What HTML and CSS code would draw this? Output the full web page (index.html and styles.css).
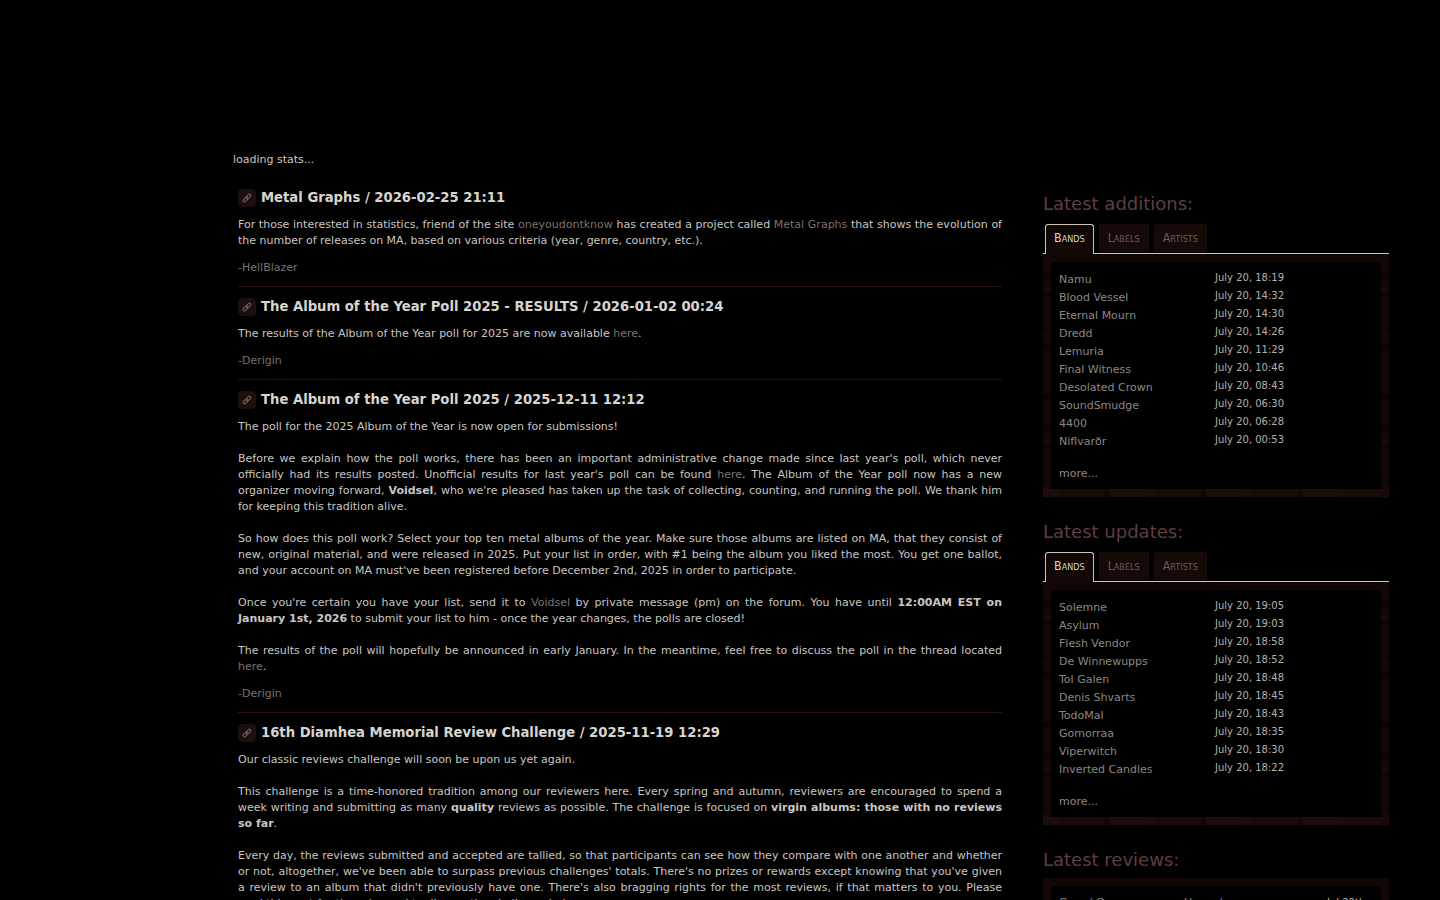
FILE: index.html
```html
<!DOCTYPE html>
<html lang="en">
<head>
  <meta charset="UTF-8" />
  <title>Encyclopaedia Metallum</title>
  <link rel="stylesheet" href="styles.css">
</head>
<body>
  <div class="page">
    <div class="stats">loading stats...</div>
    <div class="columns">
      <main class="news">
        <article class="post">
          <h2><span class="permalink"><svg viewBox="0 0 12 12"><g transform="rotate(-45 6 6)"><rect x="0.2" y="4.4" width="6.4" height="3.2" rx="1.6"/><rect x="5.4" y="4.4" width="6.4" height="3.2" rx="1.6"/></g></svg></span>Metal Graphs / 2026-02-25 21:11</h2>
          <p>For those interested in statistics, friend of the site <a href="#">oneyoudontknow</a> has created a project called <a href="#">Metal Graphs</a> that shows the evolution of the number of releases on MA, based on various criteria (year, genre, country, etc.).</p>
          <p class="sign">-<a href="#">HellBlazer</a></p>
        </article>
        <article class="post">
          <h2><span class="permalink"><svg viewBox="0 0 12 12"><g transform="rotate(-45 6 6)"><rect x="0.2" y="4.4" width="6.4" height="3.2" rx="1.6"/><rect x="5.4" y="4.4" width="6.4" height="3.2" rx="1.6"/></g></svg></span>The Album of the Year Poll 2025 - RESULTS / 2026-01-02 00:24</h2>
          <p>The results of the Album of the Year poll for 2025 are now available <a href="#">here</a>.</p>
          <p class="sign">-<a href="#">Derigin</a></p>
        </article>
        <article class="post">
          <h2><span class="permalink"><svg viewBox="0 0 12 12"><g transform="rotate(-45 6 6)"><rect x="0.2" y="4.4" width="6.4" height="3.2" rx="1.6"/><rect x="5.4" y="4.4" width="6.4" height="3.2" rx="1.6"/></g></svg></span>The Album of the Year Poll 2025 / 2025-12-11 12:12</h2>
          <p>The poll for the 2025 Album of the Year is now open for submissions!<br><br>
          Before we explain how the poll works, there has been an important administrative change made since last year's poll, which never officially had its results posted. Unofficial results for last year's poll can be found <a href="#">here</a>. The Album of the Year poll now has a new organizer moving forward, <strong>Voidsel</strong>, who we're pleased has taken up the task of collecting, counting, and running the poll. We thank him for keeping this tradition alive.<br><br>
          So how does this poll work? Select your top ten metal albums of the year. Make sure those albums are listed on MA, that they consist of new, original material, and were released in 2025. Put your list in order, with #1 being the album you liked the most. You get one ballot, and your account on MA must've been registered before December 2nd, 2025 in order to participate.<br><br>
          Once you're certain you have your list, send it to <a href="#">Voidsel</a> by private message (pm) on the forum. You have until <strong>12:00AM EST on January 1st, 2026</strong> to submit your list to him - once the year changes, the polls are closed!<br><br>
          The results of the poll will hopefully be announced in early January. In the meantime, feel free to discuss the poll in the thread located <a href="#">here</a>.</p>
          <p class="sign">-<a href="#">Derigin</a></p>
        </article>
        <article class="post">
          <h2><span class="permalink"><svg viewBox="0 0 12 12"><g transform="rotate(-45 6 6)"><rect x="0.2" y="4.4" width="6.4" height="3.2" rx="1.6"/><rect x="5.4" y="4.4" width="6.4" height="3.2" rx="1.6"/></g></svg></span>16th Diamhea Memorial Review Challenge / 2025-11-19 12:29</h2>
          <p>Our classic reviews challenge will soon be upon us yet again.<br><br>
          This challenge is a time-honored tradition among our reviewers here. Every spring and autumn, reviewers are encouraged to spend a week writing and submitting as many <strong>quality</strong> reviews as possible. The challenge is focused on <strong>virgin albums: those with no reviews so far</strong>.<br><br>
          Every day, the reviews submitted and accepted are tallied, so that participants can see how they compare with one another and whether or not, altogether, we've been able to surpass previous challenges' totals. There's no prizes or rewards except knowing that you've given a review to an album that didn't previously have one. There's also bragging rights for the most reviews, if that matters to you. Please read this post for the rules and to discuss the challenge below.</p>
        </article>
      </main>
      <aside class="sidebar">
        <section class="block">
          <h3>Latest additions:</h3>
          <ul class="tabs">
            <li class="active">Bands</li>
            <li>Labels</li>
            <li>Artists</li>
          </ul>
          <div class="frame">
            <div class="frame-inner">
              <table>
                <tr><td><a href="#">Namu</a></td><td class="when">July 20, 18:19</td></tr>
                <tr><td><a href="#">Blood Vessel</a></td><td class="when">July 20, 14:32</td></tr>
                <tr><td><a href="#">Eternal Mourn</a></td><td class="when">July 20, 14:30</td></tr>
                <tr><td><a href="#">Dredd</a></td><td class="when">July 20, 14:26</td></tr>
                <tr><td><a href="#">Lemuria</a></td><td class="when">July 20, 11:29</td></tr>
                <tr><td><a href="#">Final Witness</a></td><td class="when">July 20, 10:46</td></tr>
                <tr><td><a href="#">Desolated Crown</a></td><td class="when">July 20, 08:43</td></tr>
                <tr><td><a href="#">SoundSmudge</a></td><td class="when">July 20, 06:30</td></tr>
                <tr><td><a href="#">4400</a></td><td class="when">July 20, 06:28</td></tr>
                <tr><td><a href="#">Niflvarðr</a></td><td class="when">July 20, 00:53</td></tr>
              </table>
              <a class="more" href="#">more...</a>
            </div>
          </div>
        </section>
        <section class="block">
          <h3>Latest updates:</h3>
          <ul class="tabs">
            <li class="active">Bands</li>
            <li>Labels</li>
            <li>Artists</li>
          </ul>
          <div class="frame">
            <div class="frame-inner">
              <table>
                <tr><td><a href="#">Solemne</a></td><td class="when">July 20, 19:05</td></tr>
                <tr><td><a href="#">Asylum</a></td><td class="when">July 20, 19:03</td></tr>
                <tr><td><a href="#">Flesh Vendor</a></td><td class="when">July 20, 18:58</td></tr>
                <tr><td><a href="#">De Winnewupps</a></td><td class="when">July 20, 18:52</td></tr>
                <tr><td><a href="#">Tol Galen</a></td><td class="when">July 20, 18:48</td></tr>
                <tr><td><a href="#">Denis Shvarts</a></td><td class="when">July 20, 18:45</td></tr>
                <tr><td><a href="#">TodoMal</a></td><td class="when">July 20, 18:43</td></tr>
                <tr><td><a href="#">Gomorraa</a></td><td class="when">July 20, 18:35</td></tr>
                <tr><td><a href="#">Viperwitch</a></td><td class="when">July 20, 18:30</td></tr>
                <tr><td><a href="#">Inverted Candles</a></td><td class="when">July 20, 18:22</td></tr>
              </table>
              <a class="more" href="#">more...</a>
            </div>
          </div>
        </section>
        <section class="block">
          <h3>Latest reviews:</h3>
          <div class="frame frame-reviews">
            <div class="frame-inner">
              <div class="review"><a href="#">Grand Ossuary</a><a href="#">Hazardous</a><span>Jul 20th</span></div>
            </div>
          </div>
        </section>
      </aside>
    </div>
  </div>
</body>
</html>
```
FILE: styles.css
```css
:root {
  --text: #c9c6c3;
  --link: #7f706c;
  --heading: #5e3e42;
}
* { box-sizing: border-box; margin: 0; padding: 0; }
html, body { height: 900px; overflow: hidden; }
body {
  background: #000;
  color: var(--text);
  font-family: "DejaVu Sans", sans-serif;
  font-size: 11px;
  line-height: 16px;
}
a { color: var(--link); text-decoration: none; }
.page {
  width: 1160px;
  margin-left: 233px;
  padding-top: 152px;
}
.stats { height: 16px; }
.columns {
  display: flex;
  align-items: flex-start;
  margin-top: 20px;
  padding-left: 5px;
}
.news {
  width: 764px;
  flex: none;
}
.post {
  padding-bottom: 10px;
  margin-bottom: 10px;
  border-bottom: 1px solid #2c1215;
}
.post h2 {
  display: flex;
  align-items: center;
  gap: 5px;
  height: 19px;
  padding-top: 1px;
  margin-bottom: 10px;
  font-size: 13.2px;
  font-weight: 700;
  color: #d8d4cf;
}
.permalink {
  display: flex;
  align-items: center;
  justify-content: center;
  width: 18px;
  height: 18px;
  border-radius: 4px;
  background: #1c0f0e;
}
.permalink svg {
  width: 10px;
  height: 10px;
  fill: none;
  stroke: #6f5d59;
  stroke-width: 1.4;
}
.post p { text-align: justify; }
.post .sign { margin-top: 11px; color: var(--link); }
.sidebar {
  width: 346px;
  flex: none;
  margin-left: 41px;
  margin-top: 4px;
}
.block { margin-bottom: 23px; }
.block h3 {
  height: 28px;
  font-size: 18px;
  font-weight: 400;
  line-height: 24px;
  color: var(--heading);
}
.tabs {
  display: flex;
  gap: 5px;
  list-style: none;
  height: 30px;
  margin-top: 4px;
  padding-left: 2px;
  border-bottom: 1px solid #cfc5bd;
  font-family: "DejaVu Sans Condensed", "DejaVu Sans", sans-serif;
  font-stretch: condensed;
  font-variant: small-caps;
  font-size: 12.4px;
  line-height: 26px;
}
.tabs li {
  height: 28px;
  padding: 0 8px;
  border: 1px solid #1a0d0c;
  border-bottom: 0;
  border-radius: 3px 3px 0 0;
  background: #150a08;
  color: #6e5a56;
}
.tabs li.active {
  height: 30px;
  border-color: #cfc5bd;
  background: #120806;
  color: #d6d2cd;
}
/* mottled frame, the black inner box sits on top of it */
.frame {
  padding: 8px;
  color: #bdb8b3;
  background:
    repeating-linear-gradient(90deg, #1c0d0b 0 17px, #170a08 17px 24px, #1a0b09 24px 61px, #130706 61px 66px, #1d0e0b 66px 97px) left bottom / 100% 8px no-repeat,
    repeating-linear-gradient(0deg, #150908 0 13px, #0e0504 13px 19px, #130706 19px 47px, #0c0403 47px 51px);
}
.frame-inner {
  background: #000;
  padding: 9px 8px 6px;
}
.frame table { border-collapse: collapse; }
.frame td {
  height: 18px;
  padding: 0;
  line-height: 18px;
}
.frame a { color: #8d8783; }
.frame td:first-child { width: 156px; }
.frame td.when {
  font-size: 10px;
  color: #b5b0ab;
  vertical-align: top;
  line-height: 14px;
}
.frame .more {
  display: block;
  margin-top: 14px;
  height: 18px;
  line-height: 18px;
}
.frame-reviews { height: 200px; margin-top: 2px; }
.frame-reviews .frame-inner { height: 184px; }
.review { display: flex; }
.review a:first-child { width: 125px; }
.review a:nth-child(2) { width: 143px; }
.review span { font-size: 10px; }
```
